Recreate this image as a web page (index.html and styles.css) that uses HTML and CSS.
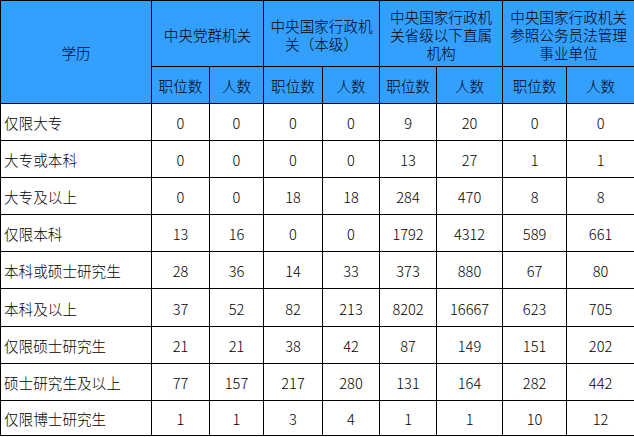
FILE: index.html
```html
<!DOCTYPE html>
<html lang="zh-CN">
<head>
<meta charset="utf-8">
<title>学历分布</title>
<link rel="stylesheet" href="styles.css">
</head>
<body>
<table class="stats">
  <colgroup>
    <col class="c1"><col class="c2"><col class="c3"><col class="c4"><col class="c5">
    <col class="c6"><col class="c7"><col class="c8"><col class="c9">
  </colgroup>
  <thead>
    <tr class="h1">
      <th rowspan="2">学历</th>
      <th colspan="2">中央党群机关</th>
      <th colspan="2">中央国家行政机<br>关（本级）</th>
      <th colspan="2">中央国家行政机<br>关省级以下直属<br>机构</th>
      <th colspan="2">中央国家行政机关<br>参照公务员法管理<br>事业单位</th>
    </tr>
    <tr class="h2">
      <th>职位数</th><th>人数</th>
      <th>职位数</th><th>人数</th>
      <th>职位数</th><th>人数</th>
      <th>职位数</th><th>人数</th>
    </tr>
  </thead>
  <tbody>
    <tr><td class="lbl">仅限大专</td><td>0</td><td>0</td><td>0</td><td>0</td><td>9</td><td>20</td><td>0</td><td>0</td></tr>
    <tr><td class="lbl">大专或本科</td><td>0</td><td>0</td><td>0</td><td>0</td><td>13</td><td>27</td><td>1</td><td>1</td></tr>
    <tr><td class="lbl">大专及以上</td><td>0</td><td>0</td><td>18</td><td>18</td><td>284</td><td>470</td><td>8</td><td>8</td></tr>
    <tr><td class="lbl">仅限本科</td><td>13</td><td>16</td><td>0</td><td>0</td><td>1792</td><td>4312</td><td>589</td><td>661</td></tr>
    <tr><td class="lbl">本科或硕士研究生</td><td>28</td><td>36</td><td>14</td><td>33</td><td>373</td><td>880</td><td>67</td><td>80</td></tr>
    <tr class="tall"><td class="lbl">本科及以上</td><td>37</td><td>52</td><td>82</td><td>213</td><td>8202</td><td>16667</td><td>623</td><td>705</td></tr>
    <tr><td class="lbl">仅限硕士研究生</td><td>21</td><td>21</td><td>38</td><td>42</td><td>87</td><td>149</td><td>151</td><td>202</td></tr>
    <tr><td class="lbl">硕士研究生及以上</td><td>77</td><td>157</td><td>217</td><td>280</td><td>131</td><td>164</td><td>282</td><td>442</td></tr>
    <tr class="last"><td class="lbl">仅限博士研究生</td><td>1</td><td>1</td><td>3</td><td>4</td><td>1</td><td>1</td><td>10</td><td>12</td></tr>
  </tbody>
</table>
</body>
</html>
```
FILE: styles.css
```css
html, body {
  margin: 0;
  padding: 0;
  background: #ffffff;
}

.stats {
  border-collapse: collapse;
  table-layout: fixed;
  width: 634px;
  font-family: "Noto Sans CJK SC", "Noto Sans", sans-serif;
  font-size: 14.6px;
  font-weight: 300;
  color: #000000;
}

.c1 { width: 151px; }
.c2 { width: 58px; }
.c3 { width: 54px; }
.c4 { width: 59px; }
.c5 { width: 57px; }
.c6 { width: 57px; }
.c7 { width: 66px; }
.c8 { width: 64px; }
.c9 { width: 68px; }

.stats th,
.stats td {
  border: 1px solid #000000;
  padding: 2px 0 0 0;
  text-align: center;
  vertical-align: middle;
  line-height: 18px;
}

.stats th {
  background: #339fff;
  font-weight: 300;
}

.h1 { height: 66px; }
.h2 { height: 37px; }

.stats tbody tr { height: 37px; }
.stats tbody tr.tall { height: 38px; }
.stats tbody tr.last { height: 35px; }

.stats td.lbl {
  text-align: left;
  padding-left: 3px;
}
```
